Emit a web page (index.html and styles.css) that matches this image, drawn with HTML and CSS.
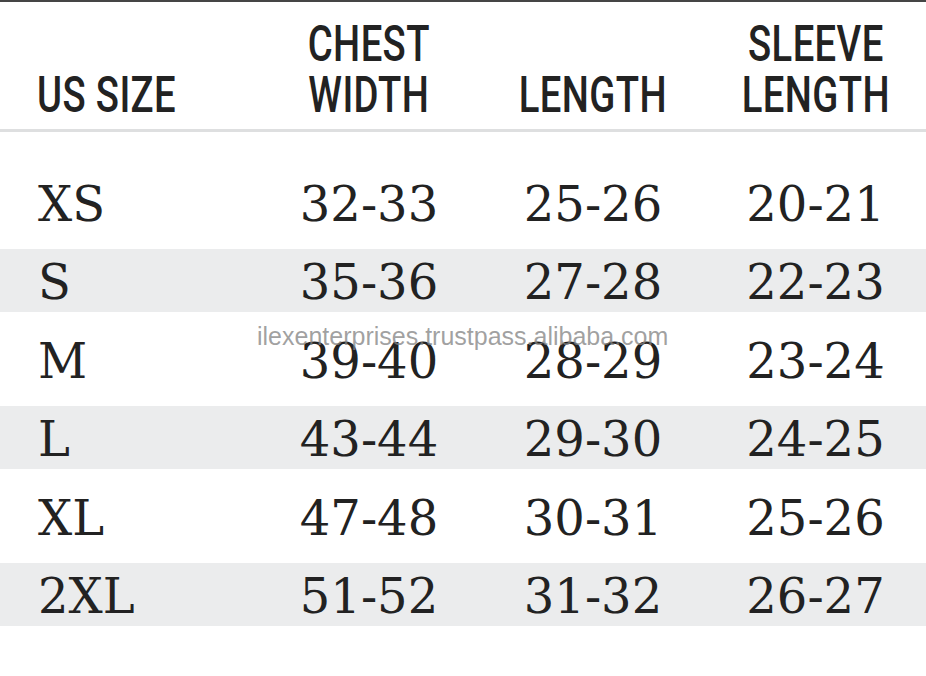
FILE: index.html
```html
<!DOCTYPE html>
<html lang="en">
<head>
<meta charset="utf-8">
<title>Size Chart</title>
<link rel="stylesheet" href="styles.css">
</head>
<body>
<div class="chart">
  <div class="head grid">
    <div class="hcell first"><span class="hx">US SIZE</span></div>
    <div class="hcell"><span class="hx">CHEST<br>WIDTH</span></div>
    <div class="hcell"><span class="hx">LENGTH</span></div>
    <div class="hcell"><span class="hx">SLEEVE<br>LENGTH</span></div>
  </div>
  <div class="rows">
    <div class="row grid"><div class="cell first">XS</div><div class="cell">32-33</div><div class="cell">25-26</div><div class="cell">20-21</div></div>
    <div class="row grid shade"><div class="cell first">S</div><div class="cell">35-36</div><div class="cell">27-28</div><div class="cell">22-23</div></div>
    <div class="row grid"><div class="cell first">M</div><div class="cell">39-40</div><div class="cell">28-29</div><div class="cell">23-24</div></div>
    <div class="row grid shade"><div class="cell first">L</div><div class="cell">43-44</div><div class="cell">29-30</div><div class="cell">24-25</div></div>
    <div class="row grid"><div class="cell first">XL</div><div class="cell">47-48</div><div class="cell">30-31</div><div class="cell">25-26</div></div>
    <div class="row grid shade"><div class="cell first">2XL</div><div class="cell">51-52</div><div class="cell">31-32</div><div class="cell">26-27</div></div>
  </div>
  <div class="watermark">ilexenterprises.trustpass.alibaba.com</div>
</div>
</body>
</html>
```

FILE: styles.css
```css
html, body {
  margin: 0;
  padding: 0;
  background: #ffffff;
}
.chart {
  position: relative;
  width: 926px;
  height: 676px;
  overflow: hidden;
  border-top: 2px solid #454545;
  box-sizing: border-box;
  color: #222222;
}
.grid {
  display: grid;
  grid-template-columns: 257px 224px 224px 1fr;
}
.head {
  padding: 16.5px 0 8.5px;
  border-bottom: 3px solid #dedfe0;
  align-items: end;
}
.hcell {
  font-family: Roboto, "Liberation Sans", sans-serif;
  font-weight: 500;
  font-size: 50px;
  line-height: 51px;
  text-align: center;
}
.hcell.first {
  text-align: left;
  padding-left: 37px;
}
.hx {
  display: inline-block;
  transform: scaleX(0.765);
  transform-origin: center;
  letter-spacing: 0.5px;
}
.first .hx {
  transform-origin: left center;
}
.rows {
  display: flex;
  flex-direction: column;
  gap: 16px;
  margin-top: 38.5px;
}
.row {
  height: 62.5px;
  line-height: 66.5px;
}
.row.shade {
  background: #ebeced;
}
.cell {
  font-family: "DejaVu Serif", "Liberation Serif", serif;
  font-size: 48px;
  text-align: center;
  white-space: nowrap;
}
.cell.first {
  text-align: left;
  padding-left: 38px;
}
.watermark {
  position: absolute;
  left: 257px;
  top: 320px;
  font-family: "Liberation Sans", Arial, sans-serif;
  font-size: 25px;
  color: rgba(130, 130, 130, 0.75);
  white-space: nowrap;
}
```
